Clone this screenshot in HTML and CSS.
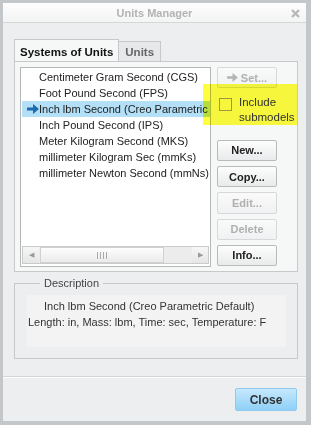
FILE: index.html
```html
<!DOCTYPE html>
<html lang="en">
<head>
    <meta charset="UTF-8">
    <meta name="viewport" content="width=device-width, initial-scale=1.0">
    <title>Units Manager</title>
    <link rel="stylesheet" href="styles.css">
</head>
<body>
    <div class="window">
        <div class="titlebar">
            <span class="title">Units Manager</span>
            <svg class="close-x" width="9" height="9" viewBox="0 0 9 9">
                <path d="M1 1L8 8M8 1L1 8" stroke="#b9b9b9" stroke-width="2.4"/>
            </svg>
        </div>

        <div class="main">
            <div class="tabs">
                <div class="tab active">Systems of Units</div>
                <div class="tab">Units</div>
            </div>

            <div class="panel">
                <div class="listbox">
                    <ul class="rows">
                        <li>Centimeter Gram Second (CGS)</li>
                        <li>Foot Pound Second (FPS)</li>
                        <li class="selected">
                            <svg class="arrow" width="12" height="10" viewBox="0 0 12 10">
                                <path d="M0 3.5h6V0l6 5-6 5V6.5H0z" fill="#1b6cb0"/>
                            </svg>
                            Inch lbm Second (Creo Parametric Default)
                        </li>
                        <li>Inch Pound Second (IPS)</li>
                        <li>Meter Kilogram Second (MKS)</li>
                        <li>millimeter Kilogram Sec (mmKs)</li>
                        <li>millimeter Newton Second (mmNs)</li>
                    </ul>
                    <div class="hscroll">
                        <div class="sb-btn">&#9664;</div>
                        <div class="sb-thumb"><span class="grip"></span></div>
                        <div class="sb-track"></div>
                        <div class="sb-btn">&#9654;</div>
                    </div>
                </div>

                <div class="actions">
                    <button class="btn" disabled>
                        <svg width="11" height="9" viewBox="0 0 12 10">
                            <path d="M0 3.5h6V0l6 5-6 5V6.5H0z" fill="#b4b4b4"/>
                        </svg>
                        Set...
                    </button>
                    <label class="check">
                        <span class="box"></span>
                        <span>Include<br>submodels</span>
                    </label>
                    <button class="btn">New...</button>
                    <button class="btn">Copy...</button>
                    <button class="btn" disabled>Edit...</button>
                    <button class="btn" disabled>Delete</button>
                    <button class="btn">Info...</button>
                </div>

                <div class="marker"></div>
            </div>

            <fieldset class="desc">
                <legend>Description</legend>
                <div class="desc-text">
                    <p class="desc-name">Inch lbm Second (Creo Parametric Default)</p>
                    <p>Length: in, Mass: lbm, Time: sec, Temperature: F</p>
                </div>
            </fieldset>
        </div>

        <div class="footer">
            <button class="btn primary">Close</button>
        </div>
    </div>
</body>
</html>
```

FILE: styles.css
```css
body {
    margin: 0;
    background: #c4c7ca;
    font-family: "Liberation Sans", Arial, sans-serif;
    font-size: 11px;
}
.window {
    margin: 3px 0 0 3px;
    width: 303px;
    height: 418px;
    background: #edeef0;
    display: flex;
    flex-direction: column;
}
.titlebar {
    height: 19px;
    border-bottom: 1px solid #d4d6d8;
    background: linear-gradient(#fdfdfd, #f3f4f4);
    display: flex;
    align-items: center;
    justify-content: center;
    position: relative;
}
.title {
    font-weight: bold;
    font-size: 11px;
    color: #b3b3b3;
}
.close-x {
    position: absolute;
    right: 6px;
    top: 6px;
}
.main {
    padding: 16px 8px 0 11px;
}
.tabs {
    display: flex;
    align-items: flex-end;
    height: 22px;
}
.tab {
    height: 19px;
    line-height: 20px;
    padding: 0 6px;
    border: 1px solid #c6c8ca;
    border-bottom: none;
    border-left: none;
    background: #e7e8ea;
    color: #666;
    font-weight: bold;
    font-size: 11.5px;
}
.tab.active {
    height: 22px;
    line-height: 24px;
    padding: 0 5px;
    border-left: 1px solid #c6c8ca;
    background: #f6f7f7;
    color: #111;
    position: relative;
    top: 1px;
}
.panel {
    border: 1px solid #c6c8ca;
    background: #f6f7f7;
    height: 199px;
    padding: 5px;
    display: flex;
    gap: 6px;
    position: relative;
}
.listbox {
    width: 189px;
    height: 198px;
    border: 1px solid #b4b6b8;
    background: #fff;
    display: flex;
    flex-direction: column;
    overflow: hidden;
}
.rows {
    list-style: none;
    margin: 0;
    padding: 1px 0 0 0;
    flex: 1;
}
.rows li {
    height: 16px;
    line-height: 16px;
    padding-left: 17px;
    margin-left: 1px;
    white-space: nowrap;
    color: #222;
    position: relative;
}
.rows li.selected {
    background: #b3dff7;
}
.arrow {
    position: absolute;
    left: 5px;
    top: 3px;
}
.hscroll {
    height: 16px;
    margin: 0 1px 2px 1px;
    border: 1px solid #c9cbcd;
    display: flex;
    background: #ececed;
}
.sb-btn {
    width: 16px;
    font-size: 7px;
    color: #999;
    text-align: center;
    line-height: 16px;
    background: linear-gradient(#f6f6f6, #e6e6e6);
}
.sb-thumb {
    width: 122px;
    margin: 0 1px;
    border: 1px solid #cfd1d3;
    background: linear-gradient(#fdfdfd, #ebebeb);
    display: flex;
    align-items: center;
    justify-content: center;
}
.grip {
    width: 11px;
    height: 7px;
    background: repeating-linear-gradient(90deg, #a9a9a9 0 1px, transparent 1px 3px);
}
.sb-track {
    flex: 1;
}
.actions {
    width: 60px;
    display: flex;
    flex-direction: column;
    gap: 5px;
}
.btn {
    height: 22px;
    width: 60px;
    padding: 0;
    border: 1px solid #b8babc;
    border-radius: 2px;
    background: linear-gradient(#fdfdfd, #e9eaeb);
    font-family: "Liberation Sans", Arial, sans-serif;
    font-size: 11px;
    font-weight: bold;
    color: #222;
    display: flex;
    align-items: center;
    justify-content: center;
    gap: 3px;
}
.btn:disabled {
    color: #b0b0b0;
    border-color: #d6d8da;
    background: linear-gradient(#fafafa, #f0f1f2);
}
.check {
    height: 43px;
    display: flex;
    align-items: flex-start;
    gap: 7px;
    padding: 7px 0 0 2px;
    box-sizing: border-box;
    margin-bottom: 5px;
    margin-top: -5px;
    color: #333;
    font-size: 11.5px;
    line-height: 15px;
    position: relative;
    z-index: 1;
}
.box {
    width: 11px;
    height: 11px;
    margin-top: 3px;
    border: 1px solid #9a9a40;
    flex-shrink: 0;
}
.marker {
    position: absolute;
    left: 188px;
    top: 22px;
    width: 94px;
    height: 41px;
    background: #ffff3e;
    mix-blend-mode: multiply;
}
.desc {
    margin: 5px 0 0 0;
    padding: 6px 11px 11px 12px;
    border: 1px solid #c6c8ca;
    min-inline-size: 0;
}
.desc legend {
    margin-left: 13px;
    padding: 0 4px;
    color: #444;
}
.desc-text {
    height: 52px;
    background: #f3f3f4;
    color: #333;
}
.desc-text p {
    margin: 0;
    height: 16px;
    line-height: 16px;
    padding-left: 1px;
}
.desc-text .desc-name {
    padding-top: 3px;
    padding-left: 17px;
}
.footer {
    margin-top: auto;
    border-top: 1px solid #d3d5d7;
    box-shadow: inset 0 1px #fff;
    padding: 11px 9px 10px;
    display: flex;
    justify-content: flex-end;
}
.btn.primary {
    width: 62px;
    height: 23px;
    border-color: #8fc9ee;
    background: linear-gradient(#c6e8fc, #8ed0f8);
    color: #333;
    font-size: 12px;
}
```
